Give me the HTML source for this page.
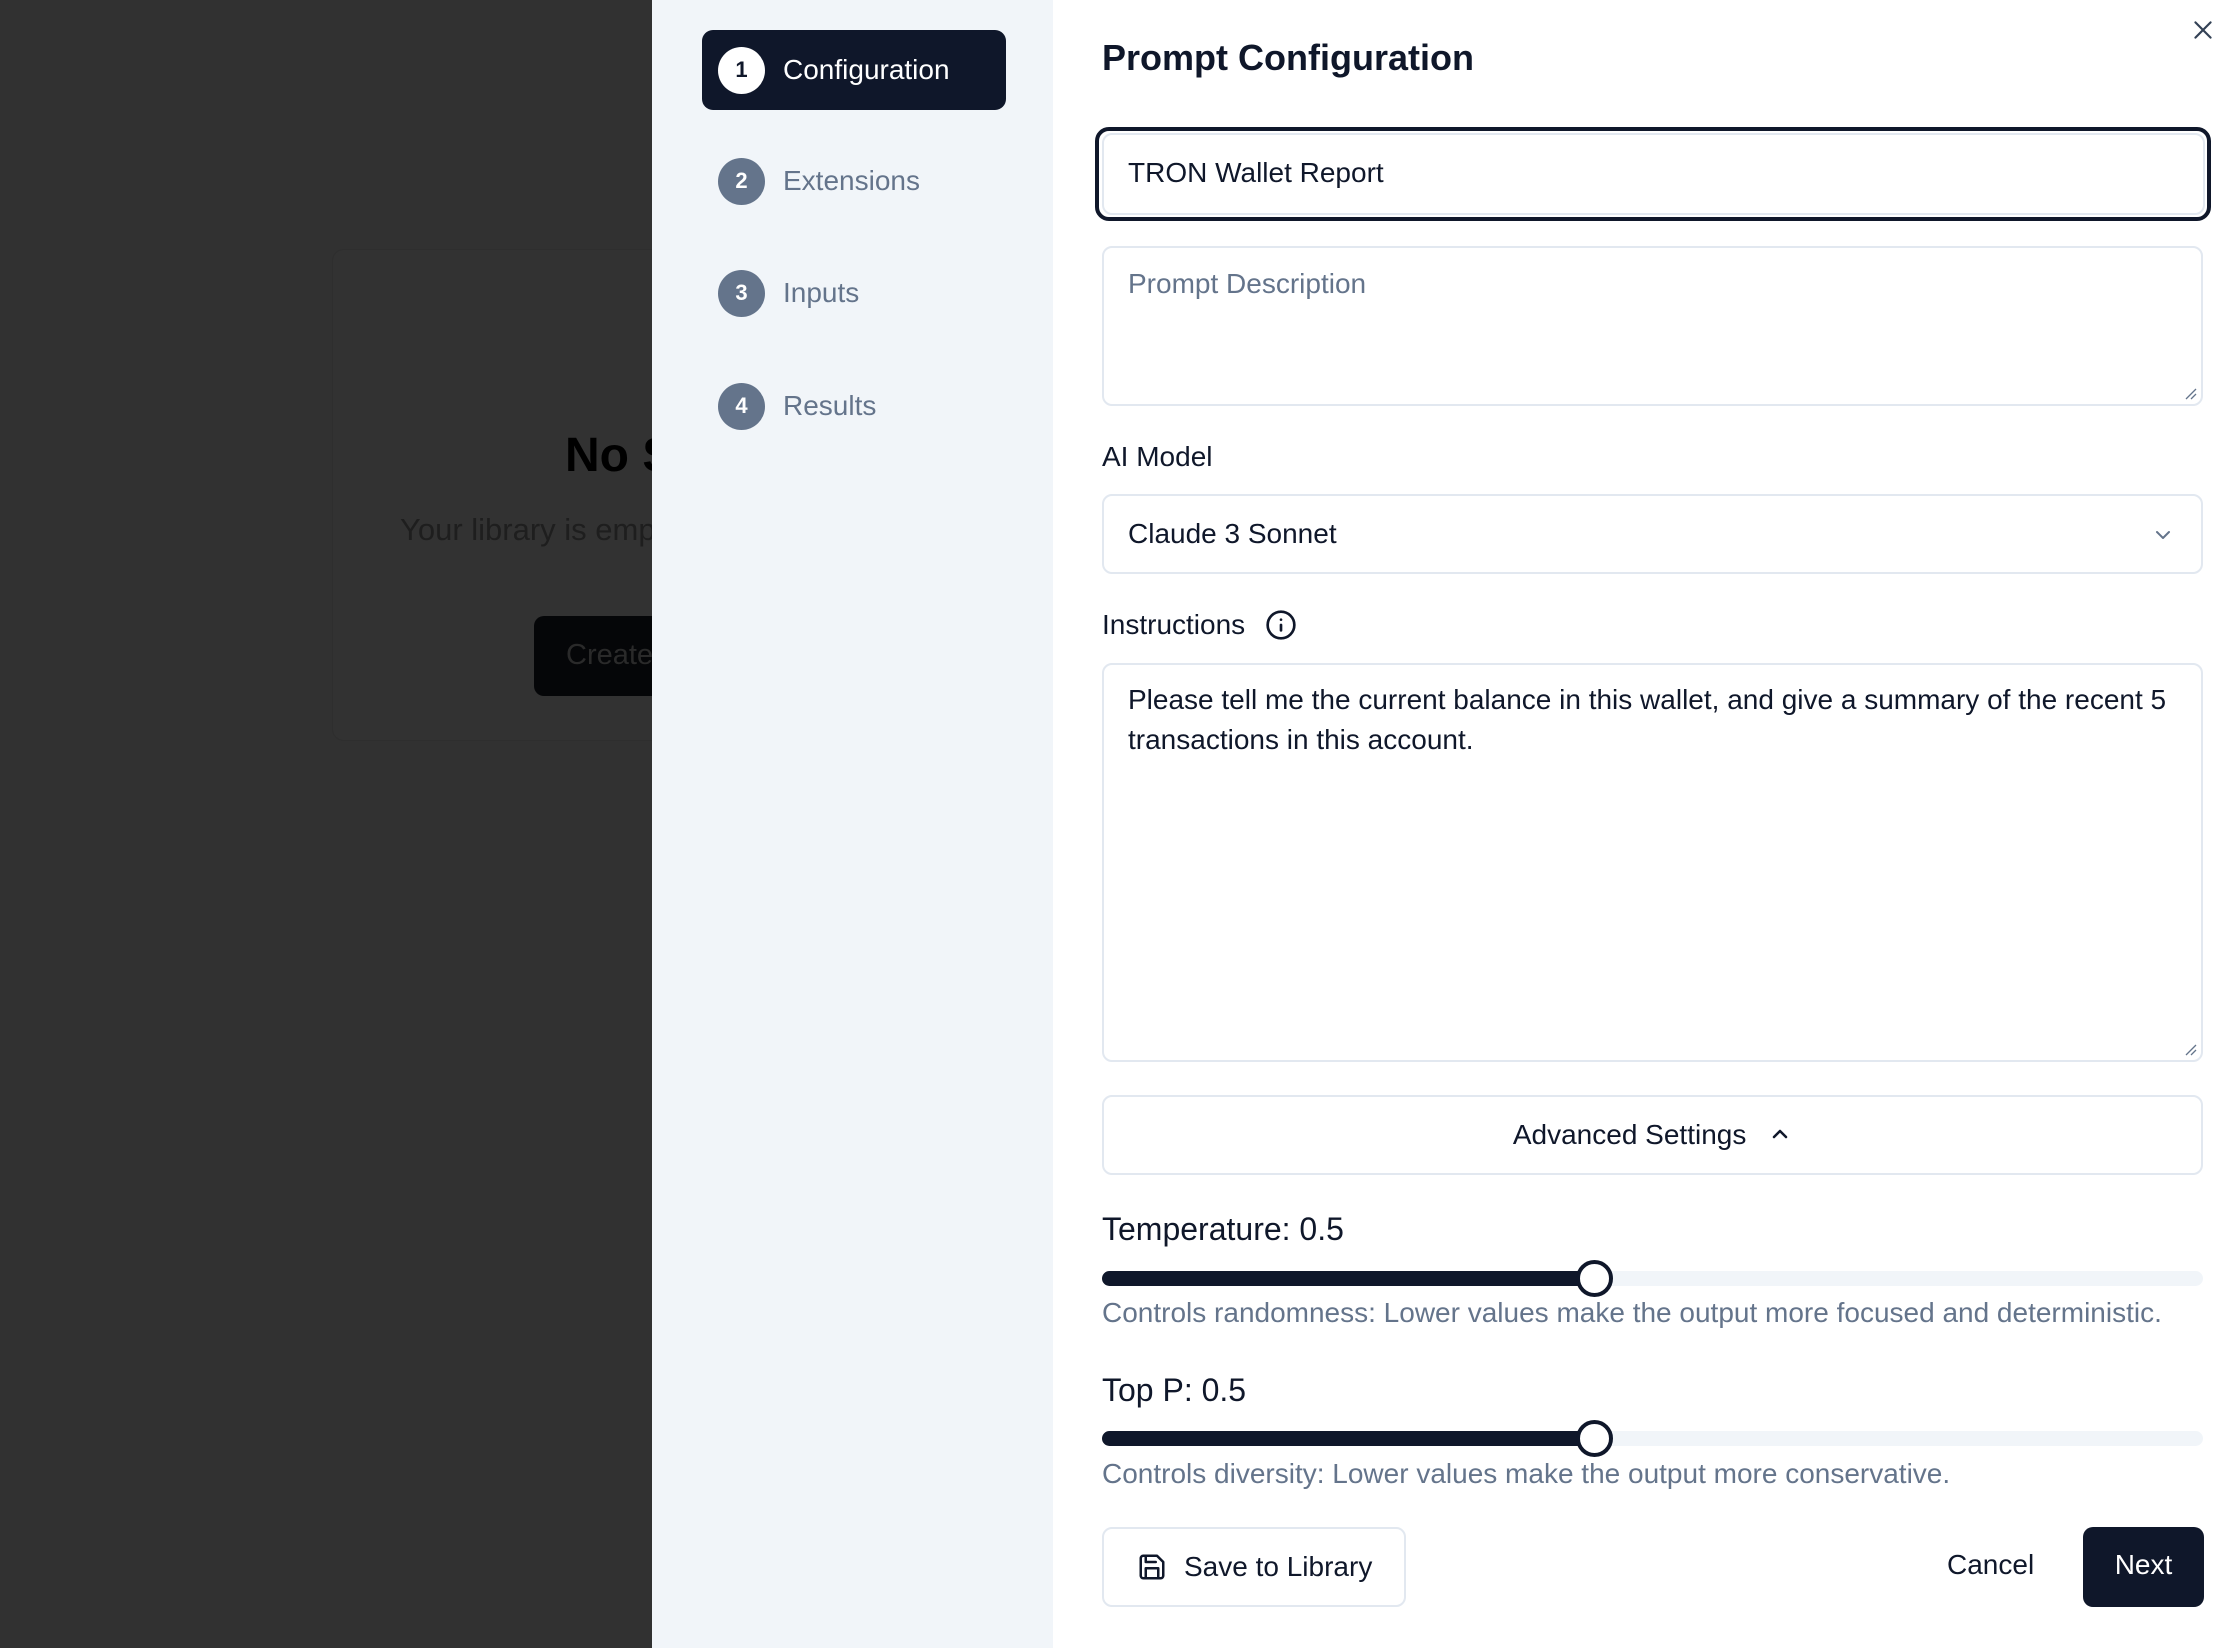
<!DOCTYPE html>
<html><head><meta charset="utf-8">
<style>
*{box-sizing:border-box;margin:0;padding:0}
html,body{width:2232px;height:1648px;overflow:hidden}
body{font-family:"Liberation Sans",sans-serif;background:#313131;position:relative;color:#0f172a}
.abs{position:absolute}
.card{left:332px;top:249px;width:900px;height:492px;border:1px solid #2e2e2e;border-radius:12px;background:#323232}
.sidebar{left:652px;top:0;width:401px;height:1648px;background:#f1f5f9}
.main{left:1053px;top:0;width:1179px;height:1648px;background:#fff}
.step{position:absolute;left:702px;width:304px;height:80px;display:flex;align-items:center;font-size:28px;color:#64748b}
.step .c{width:47px;height:47px;border-radius:50%;background:#64748b;color:#fff;font-size:22px;font-weight:bold;display:flex;align-items:center;justify-content:center;margin-left:16px;margin-right:18px}
.step.on{background:#0f172a;border-radius:11px;color:#fff}
.step.on .c{background:#fff;color:#0f172a}
.box{position:absolute;left:1102px;width:1101px;border:2px solid #e2e8f0;border-radius:10px;background:#fff;font-size:28px}
.lbl{position:absolute;left:1102px;font-size:28px;color:#0f172a}
.help{position:absolute;left:1102px;font-size:28px;color:#64748b}
.track{position:absolute;left:1102px;width:1101px;height:15px;border-radius:8px;background:#f1f5f9}
.fill{position:absolute;left:0;top:0;height:15px;width:492px;border-radius:8px;background:#0f172a}
.thumb{position:absolute;left:474px;top:-11px;width:37px;height:37px;border-radius:50%;border:4px solid #0f172a;background:#fff}
</style></head><body>
<div class="abs card"></div>
<div class="abs" style="left:565px;top:428px;font-size:48px;font-weight:bold;color:#000">No S</div>
<div class="abs" style="left:400px;top:512px;font-size:31px;color:#1e1e1e">Your library is emp</div>
<div class="abs" style="left:534px;top:616px;width:200px;height:80px;border-radius:10px;background:#050608;color:#2a2a2a;font-size:29px;padding:23px 0 0 32px">Create</div>

<div class="abs sidebar"></div>
<div class="step on" style="top:30px"><div class="c">1</div>Configuration</div>
<div class="step" style="top:141px"><div class="c">2</div>Extensions</div>
<div class="step" style="top:253px"><div class="c">3</div>Inputs</div>
<div class="step" style="top:366px"><div class="c">4</div>Results</div>

<div class="abs main"></div>
<svg class="abs" style="left:2190px;top:17px" width="26" height="26" viewBox="0 0 24 24" fill="none" stroke="#334155" stroke-width="2" stroke-linecap="round"><path d="M5 5l14 14M19 5L5 19"/></svg>
<div class="abs" style="left:1102px;top:37px;font-size:36px;font-weight:bold;color:#0f172a">Prompt Configuration</div>

<div class="abs" style="left:1095px;top:127px;width:1116px;height:94px;border:4px solid #0f172a;border-radius:14px"></div>
<div class="box" style="top:133px;width:1103px;height:82px;left:1102px;padding:22px 0 0 24px">TRON Wallet Report</div>

<div class="box" style="top:246px;height:160px;padding:20px 0 0 24px;color:#64748b">Prompt Description
<svg style="position:absolute;right:4px;bottom:4px" width="14" height="14" viewBox="0 0 14 14" stroke="#64748b" stroke-width="1.3"><path d="M13 3L3 13M13 8L8 13"/></svg></div>

<div class="lbl" style="top:441px">AI Model</div>
<div class="box" style="top:494px;height:80px;padding:22px 0 0 24px">Claude 3 Sonnet
<svg style="position:absolute;right:26px;top:27px" width="24" height="24" viewBox="0 0 24 24" fill="none" stroke="#64748b" stroke-width="2" stroke-linecap="round" stroke-linejoin="round"><path d="M6 9l6 6 6-6"/></svg></div>

<div class="lbl" style="top:609px">Instructions</div>
<svg class="abs" style="left:1265px;top:609px" width="32" height="32" viewBox="0 0 24 24" fill="none" stroke="#0f172a" stroke-width="2" stroke-linecap="round"><circle cx="12" cy="12" r="10"/><path d="M12 16v-4M12 8h.01"/></svg>
<div class="box" style="top:663px;height:399px;padding:15px 0 0 24px;line-height:40px;white-space:nowrap">Please tell me the current balance in this wallet, and give a summary of the recent 5<br>transactions in this account.
<svg style="position:absolute;right:4px;bottom:4px" width="14" height="14" viewBox="0 0 14 14" stroke="#64748b" stroke-width="1.3"><path d="M13 3L3 13M13 8L8 13"/></svg></div>

<div class="box" style="top:1095px;height:80px;text-align:center;padding-top:22px">Advanced Settings <svg style="vertical-align:middle;margin-left:14px;margin-top:-6px" width="24" height="24" viewBox="0 0 24 24" fill="none" stroke="#0f172a" stroke-width="2.5" stroke-linecap="round" stroke-linejoin="round"><path d="M6 15l6-6 6 6"/></svg></div>

<div class="lbl" style="top:1211px;font-size:32px">Temperature: 0.5</div>
<div class="track" style="top:1271px"><div class="fill"></div><div class="thumb"></div></div>
<div class="help" style="top:1297px">Controls randomness: Lower values make the output more focused and deterministic.</div>

<div class="lbl" style="top:1372px;font-size:32px">Top P: 0.5</div>
<div class="track" style="top:1431px"><div class="fill"></div><div class="thumb"></div></div>
<div class="help" style="top:1458px">Controls diversity: Lower values make the output more conservative.</div>

<div class="box" style="top:1527px;width:304px;height:80px;padding:22px 0 0 80px">Save to Library
<svg style="position:absolute;left:33px;top:23px" width="30" height="30" viewBox="0 0 24 24" fill="none" stroke="#0f172a" stroke-width="2" stroke-linecap="round" stroke-linejoin="round"><path d="M19 21H5a2 2 0 0 1-2-2V5a2 2 0 0 1 2-2h11l5 5v11a2 2 0 0 1-2 2z"/><path d="M17 21v-8H7v8M7 3v5h8"/></svg></div>
<div class="abs" style="left:1947px;top:1549px;font-size:28px;color:#0f172a">Cancel</div>
<div class="abs" style="left:2083px;top:1527px;width:121px;height:80px;border-radius:10px;background:#0f172a;color:#fff;font-size:28px;text-align:center;padding-top:22px">Next</div>
</body></html>
